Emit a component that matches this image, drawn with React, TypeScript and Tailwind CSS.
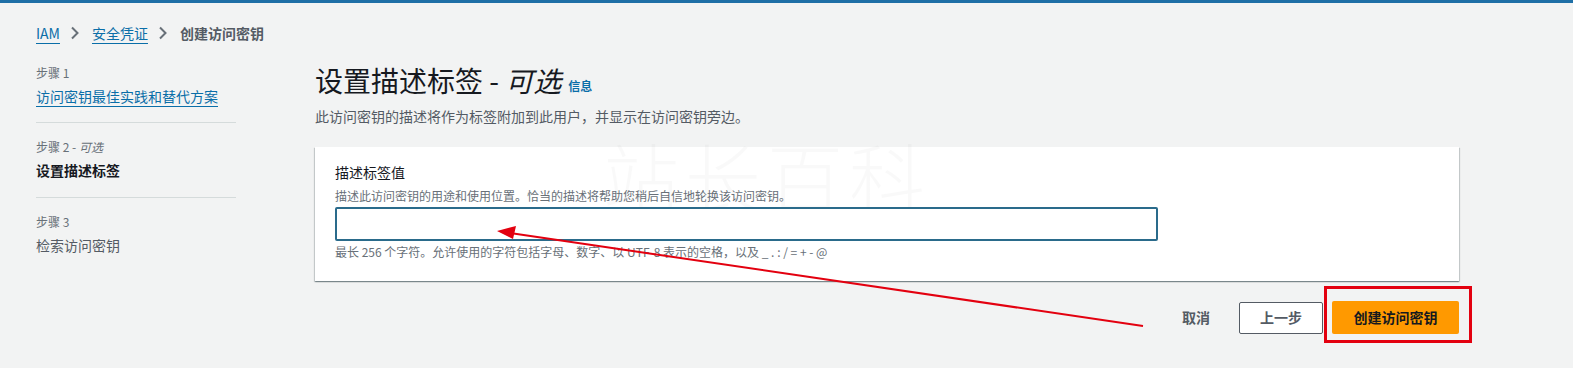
import React from "react";

const font = { fontFamily: '"Noto Sans CJK SC", "Noto Sans", sans-serif' };

function Chevron() {
  return (
    <svg width="12" height="14" viewBox="0 0 12 14" className="mx-[9px]">
      <path d="M3 1.5 L8.5 7 L3 12.5" fill="none" stroke="#687078" strokeWidth="2" />
    </svg>
  );
}

export default function App() {
  return (
    <div className="relative w-[1573px] h-[368px] overflow-hidden bg-[#f2f3f3] border-t-[3px] border-[#1e6fa6]" style={font}>
      {/* breadcrumb */}
      <div className="flex items-center pl-[36px] pt-[20px] h-[40px] text-[14px] leading-[20px]">
        <a className="text-[#0a6ea8] underline underline-offset-[4px] decoration-[1px]">IAM</a>
        <Chevron />
        <a className="text-[#0a6ea8] underline underline-offset-[4px] decoration-[1px] ml-[2px]">安全凭证</a>
        <Chevron />
        <span className="text-[#545b64] font-bold ml-[2px]">创建访问密钥</span>
      </div>

      <div className="flex mt-[22px]">
        {/* sidebar */}
        <div className="w-[280px] pl-[36px] shrink-0">
          <div className="w-[200px]">
            <div className="text-[12px] leading-[16px] text-[#687078]">步骤 1</div>
            <div className="mt-[5px] text-[14px] leading-[20px] text-[#0a6ea8] underline underline-offset-[4px] decoration-[1px]">访问密钥最佳实践和替代方案</div>
            <div className="mt-[16px] h-px bg-[#d5dbdb]" />
            <div className="mt-[16px] text-[12px] leading-[16px] text-[#687078]">步骤 2 - <i>可选</i></div>
            <div className="mt-[5px] text-[14px] leading-[20px] text-[#16191f] font-bold">设置描述标签</div>
            <div className="mt-[17px] h-px bg-[#d5dbdb]" />
            <div className="mt-[16px] text-[12px] leading-[16px] text-[#687078]">步骤 3</div>
            <div className="mt-[5px] text-[14px] leading-[20px] text-[#545b64]">检索访问密钥</div>
          </div>
        </div>

        {/* main */}
        <div className="w-[1144px] -mt-[3px] ml-[35px]">
          <div className="flex items-end h-[36px]">
            <h1 className="text-[28px] leading-[36px] text-[#16191f] font-normal">
              设置描述标签 - <i>可选</i>
            </h1>
            <span className="ml-[7px] mb-[4px] text-[12px] leading-[16px] font-bold text-[#0a6ea8]">信息</span>
          </div>
          <div className="mt-[8px] text-[14px] leading-[20px] text-[#545b64]">此访问密钥的描述将作为标签附加到此用户，并显示在访问密钥旁边。</div>

          <div className="relative mt-[21px] bg-white shadow-[0_1px_1px_0_rgba(0,28,36,0.3),1px_1px_1px_0_rgba(0,28,36,0.15),-1px_1px_1px_0_rgba(0,28,36,0.15)] pl-[20px] pt-[15px] pb-[21px]">
            {/* watermark */}
            <div className="absolute left-[288px] -top-[14px] text-[76px] leading-[84px] tracking-[6px] text-[#000]/[0.025] font-light select-none pointer-events-none">站长百科</div>
            <div className="relative text-[14px] leading-[20px] text-[#16191f]">描述标签值</div>
            <div className="relative mt-[6px] text-[12px] leading-[16px] text-[#687078]">描述此访问密钥的用途和使用位置。恰当的描述将帮助您稍后自信地轮换该访问密钥。</div>
            <div className="relative mt-[3px] w-[823px] h-[34px] border-2 border-[#2a6b8b] rounded-[2px] bg-white" />
            <div className="relative mt-[3px] text-[12px] leading-[16px] text-[#687078]">最长 256 个字符。允许使用的字符包括字母、数字、以 UTF-8 表示的空格，以及 _ . : / = + - @</div>
          </div>

          <div className="mt-[20px] flex justify-end items-center gap-[9px]">
            <button className="h-[32px] px-[20px] text-[14px] font-bold text-[#545b64]">取消</button>
            <button className="h-[32px] w-[84px] border border-[#545b64] rounded-[2px] bg-white text-[14px] font-bold text-[#545b64]">上一步</button>
            <div className="relative">
              <button className="h-[33px] w-[127px] rounded-[2px] bg-[#ff9900] text-[14px] font-bold text-[#16191f]">创建访问密钥</button>
              <div className="absolute -left-[8px] -top-[15px] w-[148px] h-[57px] border-[3px] border-[#e3000f]" />
            </div>
          </div>
        </div>
      </div>

      {/* red arrow annotation */}
      <svg className="absolute left-0 top-0 pointer-events-none" width="1573" height="368">
        <line x1="1143" y1="323" x2="510" y2="230" stroke="#e3000f" strokeWidth="2" />
        <polygon points="497,228 516,223 513,236" fill="#e3000f" />
      </svg>
    </div>
  );
}
